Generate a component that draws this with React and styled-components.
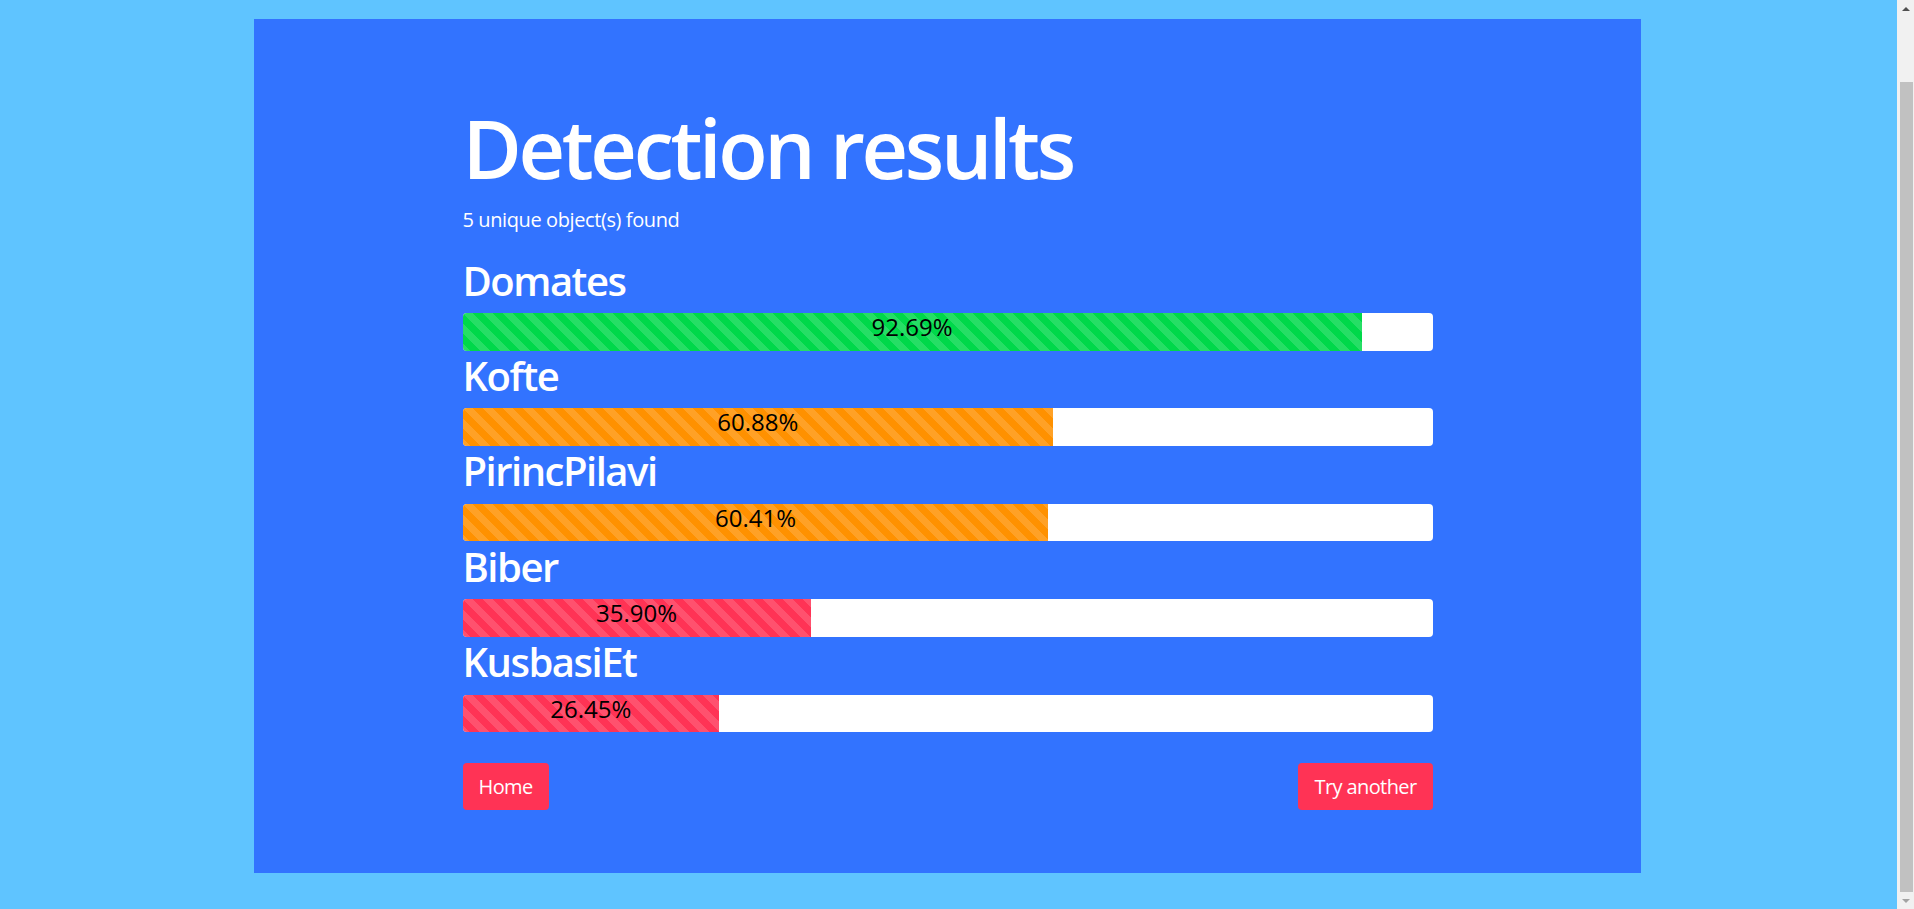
import React, { useLayoutEffect } from 'react';
import styled, { createGlobalStyle } from 'styled-components';

const GlobalStyle = createGlobalStyle`
  body {
    margin: 0;
    background: #5fc4ff;
    font-family: "Open Sans", "Noto Sans", sans-serif;
  }
`;

const Page = styled.div`
  padding: 92px 19px 36px 0;
`;

const Panel = styled.main`
  width: 1387px;
  height: 854px;
  box-sizing: border-box;
  margin: 0 auto;
  padding: 80px 208.5px 0;
  background: #3273ff;
  color: #ffffff;
`;

const Title = styled.h1`
  margin: 0;
  font-size: 81px;
  font-weight: 600;
  line-height: 1.2;
  letter-spacing: -3.4px;
`;

const Lead = styled.p`
  margin: 9px 0 20px;
  font-size: 20px;
  line-height: 1.5;
  font-weight: 400;
  letter-spacing: -0.4px;
`;

const Results = styled.div`
  display: flex;
  flex-direction: column;
`;

const Label = styled.h2`
  margin: 0 0 8.3px;
  padding-top: 1.5px;
  font-size: 40px;
  font-weight: 600;
  line-height: 48px;
  letter-spacing: -1.5px;
`;

const Track = styled.div`
  display: flex;
  height: 37.6px;
  background: #ffffff;
  border-radius: 4px;
  overflow: hidden;
`;

const Fill = styled.div`
  display: flex;
  justify-content: center;
  align-items: flex-start;
  height: 100%;
  background-color: ${(p) => p.$color};
  background-image: linear-gradient(
    45deg,
    rgba(255, 255, 255, 0.15) 25%,
    transparent 25%,
    transparent 50%,
    rgba(255, 255, 255, 0.15) 50%,
    rgba(255, 255, 255, 0.15) 75%,
    transparent 75%,
    transparent
  );
  background-size: 20px 20px;
  color: #000000;
  font-size: 24px;
  line-height: 27px;
  white-space: nowrap;
`;

const Actions = styled.div`
  display: flex;
  justify-content: space-between;
  margin-top: 30.7px;
`;

const Button = styled.button`
  height: 47px;
  padding: 0 16px;
  border: none;
  border-radius: 4px;
  background: #ff3355;
  color: #ffffff;
  font-family: inherit;
  font-size: 20px;
  letter-spacing: -0.6px;
  cursor: pointer;
`;

/* stand-in for the window scrollbar seen in the capture */
const ScrollBar = styled.div`
  position: fixed;
  top: 0;
  right: 0;
  width: 17px;
  height: 100vh;
  display: flex;
  flex-direction: column;
  align-items: center;
  background: #f1f1f1;
`;

const Arrow = styled.div`
  flex: none;
  height: 17px;
  display: flex;
  align-items: center;
  justify-content: center;
  &::before {
    content: '';
    border-left: 4px solid transparent;
    border-right: 4px solid transparent;
    ${(p) => (p.$down ? 'border-top' : 'border-bottom')}: 4px solid ${(p) => p.$tone};
  }
`;

const Gap = styled.div`
  flex: none;
  height: 65px;
`;

const Thumb = styled.div`
  flex: 1;
  width: 13px;
  margin-left: 2px;
  background: #c1c1c1;
`;

const results = [
  { name: 'Domates', score: 92.69 },
  { name: 'Kofte', score: 60.88 },
  { name: 'PirincPilavi', score: 60.41 },
  { name: 'Biber', score: 35.9 },
  { name: 'KusbasiEt', score: 26.45 },
];

const colorFor = (score) => {
  if (score >= 75) return '#00d84a';
  if (score >= 50) return '#ff9100';
  return '#ff3355';
};

export default function App() {
  useLayoutEffect(() => {
    window.scrollTo(0, 73);
  }, []);

  return (
    <Page>
      <GlobalStyle />
      <Panel>
        <Title>Detection results</Title>
        <Lead>{results.length} unique object(s) found</Lead>
        <Results>
          {results.map((r) => (
            <div key={r.name}>
              <Label>{r.name}</Label>
              <Track>
                <Fill $color={colorFor(r.score)} style={{ width: `${r.score}%` }}>
                  {r.score.toFixed(2)}%
                </Fill>
              </Track>
            </div>
          ))}
        </Results>
        <Actions>
          <Button>Home</Button>
          <Button>Try another</Button>
        </Actions>
      </Panel>
      <ScrollBar>
        <Arrow $tone="#505050" />
        <Gap />
        <Thumb />
        <Arrow $down $tone="#a3a3a3" />
      </ScrollBar>
    </Page>
  );
}
